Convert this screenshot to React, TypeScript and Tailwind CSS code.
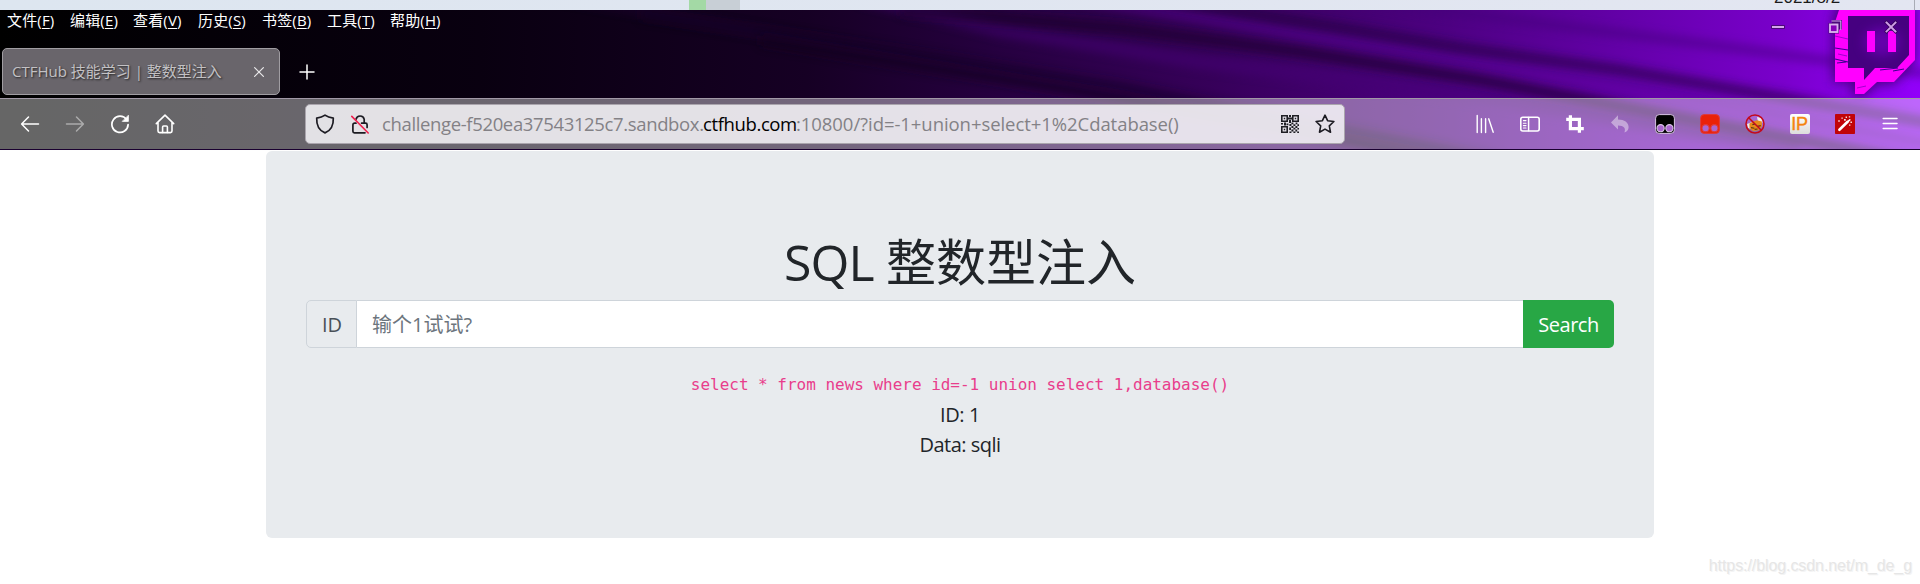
import type { ReactNode } from "react";

const UI = "font-['Open_Sans','Noto_Sans_CJK_SC',sans-serif]";

const menus = [
  { label: "文件", key: "F", width: "w-[63px]" },
  { label: "编辑", key: "E", width: "w-[63px]" },
  { label: "查看", key: "V", width: "w-[65px]" },
  { label: "历史", key: "S", width: "w-[64px]" },
  { label: "书签", key: "B", width: "w-[65px]" },
  { label: "工具", key: "T", width: "w-[63px]" },
  { label: "帮助", key: "H", width: "w-[63px]" },
];

const streaks = [
  { d: "M560 -4 L1000 75 L1500 170", c: "#26003f", w: 9, o: 0.35 },
  { d: "M860 -4 L1000 30 L1200 62 L1480 96 L1800 150", c: "#450074", w: 14, o: 0.55 },
  { d: "M1080 -4 L1300 34 L1480 62 L1620 84 L1960 150", c: "#5a0098", w: 12, o: 0.5 },
  { d: "M900 10 L1120 28 L1300 52 L1480 80 L1960 170", c: "#1a002c", w: 11, o: 0.7 },
  { d: "M1120 -6 L1340 28 L1460 48 L1620 70 L1960 128", c: "#24003e", w: 10, o: 0.65 },
  { d: "M640 14 L900 52 L1120 86 L1500 160", c: "#120020", w: 10, o: 0.5 },
  { d: "M760 40 L980 76 L1120 98 L1500 170", c: "#12001e", w: 10, o: 0.6 },
  { d: "M1300 -8 L1560 26 L1720 46 L1960 78", c: "#420078", w: 9, o: 0.5 },
];

function ThemeArt() {
  return (
    <svg className="absolute inset-0" width="1920" height="140" viewBox="0 10 1920 140">
      <defs>
        <linearGradient id="base" x1="0" x2="1920" y1="0" y2="0" gradientUnits="userSpaceOnUse">
          <stop offset="0" stopColor="#000000" />
          <stop offset="0.25" stopColor="#090010" />
          <stop offset="0.42" stopColor="#160024" />
          <stop offset="0.52" stopColor="#260040" />
          <stop offset="0.63" stopColor="#360059" />
          <stop offset="0.75" stopColor="#4c0080" />
          <stop offset="0.84" stopColor="#6200a6" />
          <stop offset="0.93" stopColor="#7a00cc" />
          <stop offset="1" stopColor="#9200fa" />
        </linearGradient>
        <filter id="soft" x="-10%" y="-50%" width="120%" height="200%">
          <feGaussianBlur stdDeviation="5" />
        </filter>
        <filter id="glow" x="-50%" y="-50%" width="200%" height="200%">
          <feGaussianBlur stdDeviation="6" />
        </filter>
      </defs>
      <rect y="10" width="1920" height="140" fill="url(#base)" />
      {streaks.map((s) => (
        <path key={s.d} d={s.d} fill="none" stroke={s.c} strokeWidth={s.w} opacity={s.o} filter="url(#soft)" />
      ))}
      <path d="M1838 4H1915V60L1894 84H1877L1864 96H1852V82H1833V20Z" fill="#3c0070" opacity="0.9" filter="url(#glow)" />
      <path d="M1839 10H1915V60L1894 82H1877L1864 94H1855V82H1835V22Z" fill="#ff00ff" />
      <path d="M1848 16H1909V55L1897 68H1875L1864 80V68H1848Z" fill="#460080" />
      <ellipse cx="1882" cy="42" rx="18" ry="14" fill="#7200bf" opacity="0.7" filter="url(#glow)" />
      <path d="M1867 31H1875V52H1867ZM1888 31H1896V52H1888Z" fill="#ff00ff" />
      <path d="M1835 48L1848 50M1835 59L1848 62M1837 63L1846 62M1880 70L1898 68M1893 71L1904 69" stroke="#3d0090" strokeWidth="1.2" />
      <path d="M1835 36L1848 39M1838 54L1847 56M1857 88L1866 86" stroke="#a000d0" strokeWidth="1" />
    </svg>
  );
}

function Cell({ children }: { children: ReactNode }) {
  return <div className="flex h-10 w-[45px] shrink-0 items-center justify-center">{children}</div>;
}

const Back = ({ className }: { className: string }) => (
  <svg className={className} width="20" height="20" viewBox="0 0 20 20" fill="none" stroke="currentColor" strokeWidth="1.5" strokeLinecap="round" strokeLinejoin="round">
    <path d="M18.5 10H1.8M8.5 3L1.6 10l6.9 7" />
  </svg>
);

const Reload = () => (
  <svg width="20" height="20" viewBox="0 0 20 20" fill="none" stroke="#fff" strokeWidth="1.7" strokeLinecap="round">
    <path d="M16.6 5.6A8.1 8.1 0 1 0 18.1 10.6" />
    <path d="M18.4 1.6V7.4H12.6Z" fill="#fff" strokeWidth="0.8" strokeLinejoin="round" />
  </svg>
);

const Home = () => (
  <svg width="20" height="20" viewBox="0 0 20 20" fill="none" stroke="#fff" strokeWidth="1.6" strokeLinecap="round" strokeLinejoin="round">
    <path d="M1.3 9.6L10 1.2l8.7 8.4M3 8.5V17a1.6 1.6 0 0 0 1.6 1.6H15.4A1.6 1.6 0 0 0 17 17V8.5" />
    <path d="M7.6 18.4V13a1 1 0 0 1 1-1h2.8a1 1 0 0 1 1 1V18.4" />
  </svg>
);

const Shield = () => (
  <svg width="20" height="20" viewBox="0 0 20 20" fill="none" stroke="#1c1b22" strokeWidth="1.7" strokeLinejoin="round">
    <path d="M10 1.1C12.3 2.7 15 3.6 18.3 4.1C18.6 11 16.5 16.3 10 18.9C3.5 16.3 1.4 11 1.7 4.1C5 3.6 7.7 2.7 10 1.1Z" />
  </svg>
);

const Lock = () => (
  <svg width="20" height="20" viewBox="0 0 20 20" fill="none" strokeLinecap="round" strokeLinejoin="round">
    <g stroke="#1c1b22" strokeWidth="1.7">
      <path d="M6 5.2A4.2 4.2 0 0 1 14.2 5.4V9M11.6 9.2H15.6A1.5 1.5 0 0 1 17.1 10.7V13.5M6 9.2H4.6A1.7 1.7 0 0 0 2.9 10.9V17.3A1.5 1.5 0 0 0 4.4 18.8H15" />
    </g>
    <path d="M1.8 2.4L18.2 19" stroke="#f0204e" strokeWidth="1.6" />
  </svg>
);

const Qr = () => (
  <svg width="20" height="20" viewBox="0 0 20 20" fill="#1f1e24">
    <path
      fillRule="evenodd"
      d="M1 1H8V8H1ZM2.6 2.6V6.4H6.4V2.6ZM12 1H19V8H12ZM13.6 2.6V6.4H17.4V2.6ZM1 12H8V19H1ZM2.6 13.6V17.4H6.4V13.6Z"
    />
    <path d="M3.8 3.8H5.2V5.2H3.8ZM14.8 3.8H16.2V5.2H14.8ZM3.8 14.8H5.2V16.2H3.8ZM9 1H11V3H9ZM8 3.5H12V5.5H8ZM9 6H11V9H9ZM1 9H3V10.6H1ZM4 8.6H6V11.4H4ZM6.5 9.4H8.4V11.2H6.5ZM9.4 10H11.4V12H9.4ZM11.4 8.6H13.4V10.2H11.4ZM13.4 10.2H15.4V12H13.4ZM15.6 8.6H17.4V10.2H15.6ZM17.4 10.2H19V12H17.4ZM11.4 12H13.4V14H11.4ZM15.4 12H17.4V14H15.4ZM9.2 13.6H11V16H9.2ZM13.4 13.8H15.4V15.6H13.4ZM17.4 14H19V15.6H17.4ZM11.4 15.6H13.4V17.4H11.4ZM15.4 15.6H17.2V17.4H15.4ZM9.4 17.4H11.4V19H9.4ZM13.4 17.4H15.4V19H13.4ZM17.2 17.4H19V19H17.2Z" />
  </svg>
);

const Star = () => (
  <svg width="20" height="20" viewBox="0 0 20 20" fill="none" stroke="#1c1b22" strokeWidth="1.6" strokeLinejoin="round">
    <path d="M10 1.2L12.6 6.7L18.9 7.5L14.3 11.8L15.5 18.2L10 15.1L4.5 18.2L5.7 11.8L1.1 7.5L7.4 6.7Z" />
  </svg>
);

const Library = () => (
  <svg width="20" height="20" viewBox="0 0 20 20" fill="none" stroke="#fff" strokeWidth="1.4" strokeLinecap="round">
    <path d="M2.2 1.5V18.5M6.4 4.8V18.5M10.6 4.8V18.5M13.7 4.8L18.2 18.3" />
  </svg>
);

const Sidebar = () => (
  <svg width="22" height="20" viewBox="0 0 22 20" fill="none" stroke="#fff" strokeLinecap="round">
    <rect x="1.8" y="3.2" width="18.4" height="13.8" rx="2" strokeWidth="1.6" />
    <path d="M9.6 3.4V16.8" strokeWidth="1.5" />
    <path d="M4.4 6.6H7M4.4 9.2H7M4.4 11.6H7M4.4 14H7" strokeWidth="1.1" />
  </svg>
);

const Crop = () => (
  <svg width="20" height="20" viewBox="0 0 20 20" fill="none" stroke="#fff" strokeWidth="3.2">
    <path d="M1.2 5.4H14.4V18.8M5.4 1.2V14.6H18.8" />
  </svg>
);

const Undo = () => (
  <svg width="20" height="20" viewBox="0 0 20 20" fill="#fff" opacity="0.42">
    <path d="M8 1.2V5.4C14.4 5.4 18.6 8.2 18.6 13.2C18.6 15.6 17 17.6 14.4 18.6C16 14.6 14.2 11.6 8 11.6V15.4L1 8.4Z" />
  </svg>
);

const Monkey = ({ fill, edge }: { fill: string; edge: string }) => (
  <svg width="20" height="20" viewBox="0 0 20 20">
    <rect x="0.6" y="0.6" width="18.8" height="18.8" rx="3.6" fill={fill} stroke={edge} strokeWidth="1" />
    <g fill="#ab66d0" stroke={edge} strokeWidth="1.1">
      <circle cx="5.6" cy="14.2" r="3.6" />
      <circle cx="14.4" cy="14.2" r="3.6" />
    </g>
  </svg>
);

const NoFox = () => (
  <svg width="20" height="20" viewBox="0 0 20 20" fill="none">
    <path d="M12 3L17 4L17.4 9L13 8ZM2 10L7 8L6 15L3 14Z" fill="#f0e8ee" />
    <path d="M4.4 9.4L8 7.6L12 6.2L16.8 7.6L17 12L13.6 16.2L8 17L4.6 14Z" fill="#e58a1c" />
    <path d="M7.4 10.6L10 10M6 13.6L9.4 14.2M12.4 12.4L15.8 11.6M9.6 15.4L12.6 15" stroke="#5b3612" strokeWidth="1.1" />
    <circle cx="10" cy="10" r="9" stroke="#c4091c" strokeWidth="1.5" />
    <path d="M3.7 3.7L16.3 16.3" stroke="#c4091c" strokeWidth="1.5" />
  </svg>
);

const Wand = () => (
  <svg width="20" height="20" viewBox="0 0 20 20">
    <rect width="20" height="20" rx="0.8" fill="#c10408" />
    <path d="M4.4 15.8L12.6 7.8" stroke="#fff" strokeWidth="2.6" strokeLinecap="round" />
    <path d="M12.4 8L14.8 5.8" stroke="#fff" strokeWidth="1.6" strokeLinecap="round" />
    <path d="M3.2 6.2h1.6v1.6H3.2zM6.4 3.4h1.4v1.4H6.4zM9 5h1.8v1.8H9zM10.6 2.6h1.4V4h-1.4zM13.8 2.2h1.4v1.4h-1.4zM15.4 7.4H17V9h-1.6zM14 10.4h1.4v1.4H14z" fill="#fff" opacity="0.85" />
  </svg>
);

const Menu = () => (
  <svg width="20" height="20" viewBox="0 0 20 20" stroke="#fff" strokeWidth="1.5" strokeLinecap="round">
    <path d="M3.2 4.5H17M3.2 9.5H17M3.2 14.5H17" />
  </svg>
);

function WindowControls() {
  return (
    <div className="flex h-[34px] items-center">
      <div className="flex w-[57px] justify-center">
        <svg width="16" height="6" viewBox="0 0 16 6">
          <rect x="1" y="1" width="14" height="4" rx="1" fill="#4a0a78" />
          <rect x="2" y="2" width="12" height="2" fill="#d5a6ec" />
        </svg>
      </div>
      <div className="flex w-[57px] justify-center">
        <svg width="16" height="16" viewBox="0 0 16 16" fill="none">
          <g stroke="#4a0a78" strokeWidth="3">
            <path d="M5 2.5H13.5V10.5" />
            <rect x="3" y="5.5" width="7.5" height="7.5" />
          </g>
          <path d="M4.5 2H13.8V11" stroke="#d5a6ec" strokeWidth="1.1" />
          <rect x="3" y="5.5" width="7.5" height="7.5" fill="#8500b8" stroke="#d9b0ee" strokeWidth="1.9" />
        </svg>
      </div>
      <div className="flex w-[56px] justify-center">
        <svg width="16" height="16" viewBox="0 0 16 16" fill="none" strokeLinecap="square">
          <path d="M3.5 3.5L12.5 12.5M12.5 3.5L3.5 12.5" stroke="#37005c" strokeWidth="3.4" />
          <path d="M3.5 3.5L12.5 12.5M12.5 3.5L3.5 12.5" stroke="#cf9fe6" strokeWidth="1.9" />
        </svg>
      </div>
    </div>
  );
}

function BrowserChrome() {
  return (
    <header className="relative h-[140px] bg-black">
      <ThemeArt />
      <div className="relative flex h-full flex-col">
        <div className="flex h-[34px] justify-between">
          <nav className="flex pl-[7px] text-[15px] leading-[20px] tracking-[0.15px] text-white">
            {menus.map((m) => (
              <span key={m.key} className={`${m.width} whitespace-nowrap`}>
                {m.label}(<span className="underline decoration-1 underline-offset-2">{m.key}</span>)
              </span>
            ))}
          </nav>
          <div className="pr-[1px]">
            <WindowControls />
          </div>
        </div>

        <div className="flex h-[54px] items-start pt-1 pl-[2px]">
          <div className="flex h-[47px] w-[278px] items-center justify-between rounded-[5px] border border-[#a09da2] bg-[#69656b] pr-[14px] pl-[9px]">
            <span className="text-[15px] whitespace-nowrap text-[#c3c1c4] [text-shadow:1px_1px_2px_#222]">
              CTFHub 技能学习 | 整数型注入
            </span>
            <svg width="12" height="12" viewBox="0 0 12 12" stroke="#e9e8ea" strokeWidth="1.2" strokeLinecap="round">
              <path d="M1.6 1.6L10.4 10.4M10.4 1.6L1.6 10.4" />
            </svg>
          </div>
          <svg className="mt-4 ml-[19px]" width="16" height="16" viewBox="0 0 16 16" stroke="#fff" strokeWidth="1.5" strokeLinecap="round">
            <path d="M8 1V15M1 8H15" />
          </svg>
        </div>

        <div className="flex h-[52px] items-center border-t border-b border-t-[#a199a6] border-b-[#1a0030] bg-white/40 pl-[7px]">
          <div className="flex w-[298px]">
            <Cell><Back className="text-white" /></Cell>
            <Cell><Back className="rotate-180 text-white/45" /></Cell>
            <Cell><Reload /></Cell>
            <Cell><Home /></Cell>
          </div>
          <div className="flex h-10 w-[1040px] items-center rounded-[5px] border border-[#aaa5ad] bg-[#f5f3f7]/87 pr-[9px] pl-[9px]">
            <Shield />
            <div className="ml-[15px]"><Lock /></div>
            <div className="ml-[12px] flex flex-1 text-[18.5px] whitespace-nowrap text-[#838186]">
              <span className="w-[321px] tracking-[-0.36px]">challenge-f520ea37543125c7.sandbox.</span>
              <span className="w-[93px] tracking-[-0.38px] text-black">ctfhub.com</span>
              <span className="tracking-[-0.06px]">:10800/?id=-1+union+select+1%2Cdatabase()</span>
            </div>
            <Qr />
            <div className="ml-[15px]"><Star /></div>
          </div>
          <div className="ml-[117px] flex">
            <Cell><Library /></Cell>
            <Cell><Sidebar /></Cell>
            <Cell><Crop /></Cell>
            <Cell><Undo /></Cell>
            <Cell><Monkey fill="#000000" edge="#d9c3e6" /></Cell>
            <Cell><Monkey fill="#ea2208" edge="#e03a3a" /></Cell>
            <Cell><NoFox /></Cell>
            <Cell>
              <span className="flex size-5 items-center justify-center rounded-[2px] bg-linear-to-b from-white to-[#dcdcdc] font-['Liberation_Sans',sans-serif] text-[18px] leading-none font-normal tracking-[-0.3px] text-[#f58410] [-webkit-text-stroke:0.4px_#f58410]">
                IP
              </span>
            </Cell>
            <Cell><Wand /></Cell>
            <Cell><Menu /></Cell>
          </div>
        </div>
      </div>
    </header>
  );
}

export default function App() {
  return (
    <div className={`${UI} flex h-[584px] w-[1920px] flex-col overflow-hidden bg-white`}>
      <div className="flex h-[10px] overflow-hidden bg-linear-to-r from-[#dde6f0] to-[#e3e6f1]">
        <div className="ml-[689px] w-[17px] bg-[#a3d9a5]" />
        <div className="w-[34px] bg-[#c8cfd6]" />
        <div className="ml-[1034px] flex h-[10px] w-[141px] items-end border-r border-[#a9acb5] text-[17px] leading-[15px] text-[#1a1a1a]">
          <span className="mb-[5px] font-['Liberation_Sans',sans-serif]">2021/8/2</span>
        </div>
      </div>
      <BrowserChrome />

      <main className="flex flex-1 flex-col pt-[1px]">
        <section className="mx-auto flex h-[387px] w-[1388px] flex-col items-center rounded-[6px] bg-[#e8ebee] px-10 pt-[82px] text-[#212529]">
          <h1 className="h-[67px] text-[50px] leading-[59px] font-normal whitespace-nowrap">
            <span className="tracking-[-0.8px]">SQL </span>整数型注入
          </h1>
          <form className="flex h-12 w-full text-[20px] leading-[30px]">
            <label className="flex w-[51px] items-center justify-center rounded-l-[5px] border border-[#ced4da] pt-[1px] pl-[1px] text-[#495057]">ID</label>
            <div className="flex flex-1 items-center border-y border-[#ced4da] bg-white pt-[1px] pl-[15px] text-[#6c757d]">输个1试试?</div>
            <button type="button" className="w-[91px] rounded-r-[5px] bg-[#28a745] pt-[2px] tracking-[-0.5px] text-white">Search</button>
          </form>
          <code className="mt-[22px] font-['DejaVu_Sans_Mono',monospace] text-[16px] leading-[30px] tracking-[-0.02px] whitespace-pre text-[#e83e8c]">
            select * from news where id=-1 union select 1,database()
          </code>
          <p className="text-[20px] leading-[30px] tracking-[-0.4px]">ID: 1</p>
          <p className="text-[20px] leading-[30px] tracking-[-0.5px]">Data: sqli</p>
        </section>
        <footer className="mt-[17px] flex justify-end pr-[8px] font-['Liberation_Sans',sans-serif] text-[16px] leading-[22px] tracking-[-0.08px] text-[#e6e6e6] [text-shadow:1px_1px_0_#f4f4f4]">
          https://blog.csdn.net/m_de_g
        </footer>
      </main>
    </div>
  );
}
